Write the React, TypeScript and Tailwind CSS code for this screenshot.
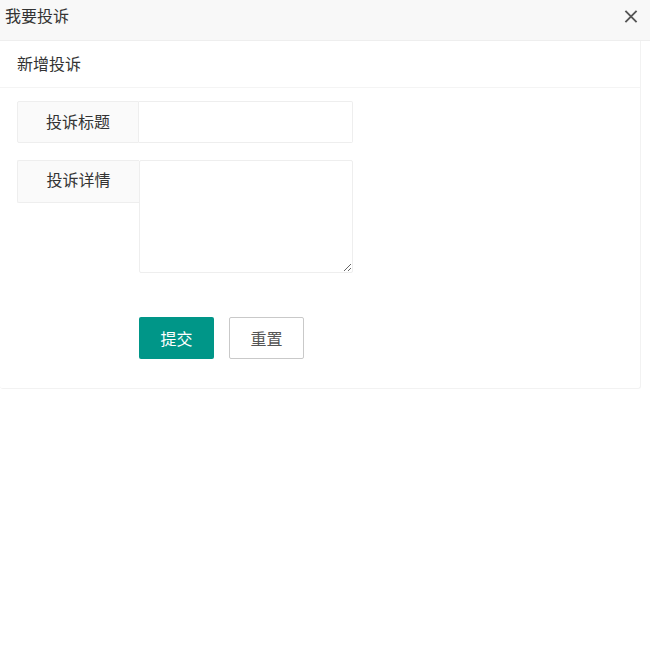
import React from "react";

export default function App() {
  return (
    <div
      className="w-[650px] h-[656px] bg-white text-[16px] text-[#333]"
      style={{ fontFamily: '"Noto Sans CJK SC", "Noto Sans", sans-serif' }}
    >
      <div className="relative h-[41px] bg-[#f8f8f8] border-b border-[#eeeeee] pl-[5px] leading-[31px]">
        我要投诉
        <span className="absolute right-[12px] top-[9px] w-[14px] h-[14px] flex items-center justify-center">
          <svg width="15" height="15" viewBox="0 0 15 15">
            <path d="M1.5 1.5 L13.5 13.5 M13.5 1.5 L1.5 13.5" stroke="#555555" strokeWidth="2" strokeLinecap="butt" />
          </svg>
        </span>
      </div>
      <div className="w-[641px] rounded-b-[3px] bg-white border-r border-b border-[#f2f2f2]">
        <div className="h-[47px] border-b border-[#f4f4f4] pl-[17px] leading-[44px]">新增投诉</div>
        <div className="pt-[13px] pl-[17px] pb-[29px]">
          <div className="flex">
            <div className="w-[122px] h-[42px] flex items-center justify-center bg-[#fafafa] border border-[#eeeeee] rounded-l-[2px] pb-[3px]">
              投诉标题
            </div>
            <input
              type="text"
              className="w-[214px] h-[42px] border border-l-0 border-[#eeeeee] rounded-r-[2px] outline-none px-[10px]"
            />
          </div>
          <div className="flex items-start mt-[17px]">
            <div className="w-[122px] h-[43px] flex items-center justify-center bg-[#fafafa] border border-r-0 border-[#eeeeee] rounded-l-[2px] pb-[5px]">
              投诉详情
            </div>
            <textarea className="w-[214px] h-[113px] border border-[#eeeeee] rounded-[2px] outline-none block" />
          </div>
          <div className="flex gap-[15px] mt-[44px] pl-[122px]">
            <button className="w-[75px] h-[42px] bg-[#009688] text-white rounded-[2px]">提交</button>
            <button className="w-[75px] h-[42px] bg-white text-[#555] border border-[#c9c9c9] rounded-[2px]">重置</button>
          </div>
        </div>
      </div>
    </div>
  );
}
